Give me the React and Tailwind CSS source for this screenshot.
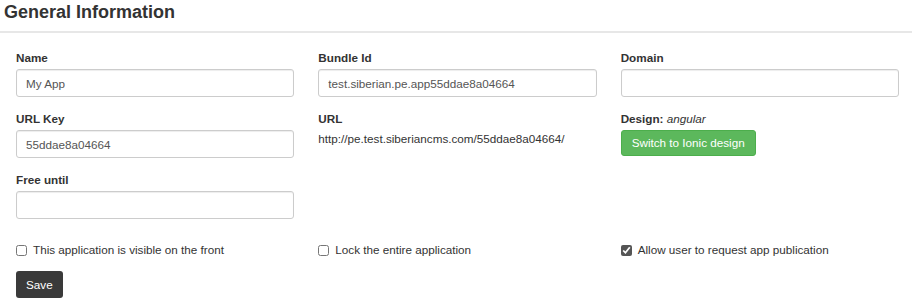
const Field = ({ label, value, children }) => (
  <div className="flex flex-col">
    <label className="text-[11.7px] font-bold text-[#333] leading-[16px] h-[16px] mb-[3px]">{label}</label>
    {children ?? (
      <input
        readOnly
        value={value ?? ""}
        className="h-[28px] w-full border border-[#ccc] rounded-[3px] px-[9px] text-[11.7px] text-[#555] bg-white shadow-[inset_0_1px_1px_rgba(0,0,0,0.075)] outline-none"
      />
    )}
  </div>
);

const Check = ({ label, checked }) => (
  <label className="flex items-center gap-[6px] text-[11.7px] text-[#333] leading-[16px]">
    <input type="checkbox" defaultChecked={checked} className="w-[11px] h-[11px] m-0 accent-[#555]" />
    <span>{label}</span>
  </label>
);

export default function App() {
  return (
    <div className="w-[920px] h-[307px] bg-white font-['Liberation_Sans',Arial,sans-serif] text-[#333] overflow-hidden">
      <div className="w-[912px]">
        <h2 className="text-[18px] font-bold leading-[20px] pl-[4px] pt-[2px] h-[31px]">General Information</h2>
        <div className="border-b-2 border-[#e7e7e7]" />
      </div>
      <div className="pl-[16px] pr-[21px] pt-[17px]">
        <div className="grid grid-cols-3 gap-x-[24px] gap-y-[14px]">
          <Field label="Name" value="My App" />
          <Field label="Bundle Id" value="test.siberian.pe.app55ddae8a04664" />
          <Field label="Domain" value="" />
          <Field label="URL Key" value="55ddae8a04664" />
          <Field label="URL">
            <div className="text-[11.7px] text-[#333] leading-[16px] pt-[1px]">http://pe.test.siberiancms.com/55ddae8a04664/</div>
          </Field>
          <Field label={<>Design: <span className="font-normal italic">angular</span></>}>
            <button className="self-start h-[26px] px-[10px] bg-[#5cb85c] border border-[#4cae4c] rounded-[3px] text-white text-[11.7px] leading-[16px]">
              Switch to Ionic design
            </button>
          </Field>
          <Field label="Free until" value="" />
        </div>
        <div className="grid grid-cols-3 gap-x-[24px] mt-[23px]">
          <Check label="This application is visible on the front" />
          <Check label="Lock the entire application" />
          <Check label="Allow user to request app publication" checked />
        </div>
        <button className="mt-[13px] h-[27px] px-[10px] bg-[#3a3a3a] rounded-[3px] text-white text-[11.7px] leading-[16px]">Save</button>
      </div>
    </div>
  );
}
